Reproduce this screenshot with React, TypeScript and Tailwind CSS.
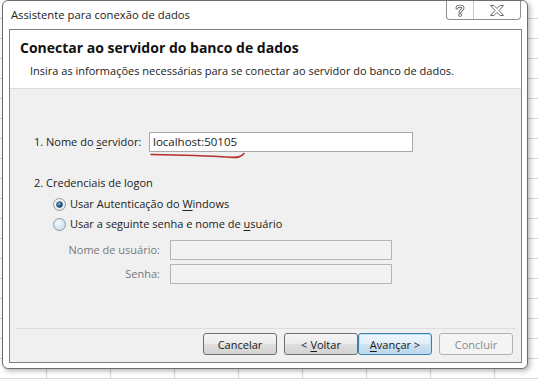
import React from 'react';

const font = "font-['Open_Sans','Noto_Sans',sans-serif]";

const Radio = ({ checked }: { checked: boolean }) => (
  <svg width="13" height="13" viewBox="0 0 13 13" className="shrink-0">
    <defs>
      <radialGradient id={checked ? 'rOn' : 'rOff'} cx="0.4" cy="0.35" r="0.7">
        <stop offset="0" stopColor={checked ? '#ffffff' : '#f4f9fd'} />
        <stop offset="1" stopColor={checked ? '#dfe7ee' : '#c6ddf0'} />
      </radialGradient>
      <radialGradient id="dot" cx="0.4" cy="0.35" r="0.7">
        <stop offset="0" stopColor="#7fb6dd" />
        <stop offset="0.6" stopColor="#2a5f8c" />
        <stop offset="1" stopColor="#12324f" />
      </radialGradient>
    </defs>
    <circle cx="6.5" cy="6.5" r="6" fill={`url(#${checked ? 'rOn' : 'rOff'})`} stroke="#8d9aa6" />
    {checked && <circle cx="6.5" cy="6.5" r="3" fill="url(#dot)" stroke="#1c3c5a" strokeWidth="0.6" />}
  </svg>
);

const Button = ({ children, variant }: { children: React.ReactNode; variant?: 'default' | 'disabled' }) => {
  let cls =
    'border-[#707070] bg-[linear-gradient(to_bottom,#f4f4f4_0%,#ececec_48%,#dedede_52%,#d3d3d3_100%)] text-[#1a1a1a]';
  if (variant === 'default')
    cls =
      'border-[#3c7fb1] bg-[linear-gradient(to_bottom,#eef6fb_0%,#e2eef7_48%,#cfe3f2_52%,#bcd6ec_100%)] text-[#1a1a1a] shadow-[inset_0_0_0_1px_#bfe0f5]';
  if (variant === 'disabled') cls = 'border-[#adb2b5] bg-[#f4f4f4] text-[#8a8a8a]';
  return (
    <div
      className={`${cls} flex h-[22px] w-[74px] items-center justify-center rounded-[3px] border text-[11px] leading-none`}
    >
      {children}
    </div>
  );
};

const App = () => {
  return (
    <div
      className={`${font} h-[379px] w-[538px] overflow-hidden bg-white [background-image:linear-gradient(to_right,#d6d6d6_1px,transparent_1px),linear-gradient(to_bottom,#d6d6d6_1px,transparent_1px)] [background-size:64px_20px] [background-position:46px_18px]`}
    >
      <div className="ml-[2px] flex h-[369px] w-[526px] flex-col rounded-[6px] border border-[#6e6e6e] bg-white pr-[5px] pb-[5px] pl-[6px] shadow-[2px_2px_5px_rgba(0,0,0,0.3)]">
        {/* title bar */}
        <div className="flex h-[28px] items-start justify-between">
          <div className="mt-[6px] ml-[2px] text-[11.25px] leading-[16px] text-[#222]">
            Assistente para conexão de dados
          </div>
          <div className="mr-[1px] flex h-[19px] rounded-b-[4px] border-x border-b border-[#8f8f8f] bg-white">
            <div className="flex w-[27px] items-center justify-center border-r border-[#c8c8c8]">
              <svg width="10" height="13" viewBox="0 0 10 13">
                <path
                  d="M2 4 C2 1.5 8 1.5 8 4 C8 6 5 6 5 8.2"
                  fill="none"
                  stroke="#6a6a6a"
                  strokeWidth="3"
                  strokeLinecap="round"
                />
                <path
                  d="M2 4 C2 1.5 8 1.5 8 4 C8 6 5 6 5 8.2"
                  fill="none"
                  stroke="#fff"
                  strokeWidth="1.2"
                  strokeLinecap="round"
                />
                <circle cx="5" cy="11" r="1.5" fill="#fff" stroke="#6a6a6a" strokeWidth="0.9" />
              </svg>
            </div>
            <div className="flex w-[46px] items-center justify-center">
              <svg width="14" height="11" viewBox="0 0 14 11">
                <polygon
                  points="0.5,0.5 4,0.5 7,3.5 10,0.5 13.5,0.5 9,5.5 13.5,10.5 10,10.5 7,7.5 4,10.5 0.5,10.5 5,5.5"
                  fill="#fff"
                  stroke="#6a6a6a"
                  strokeWidth="1"
                  strokeLinejoin="round"
                />
              </svg>
            </div>
          </div>
        </div>

        {/* inner panel */}
        <div className="flex flex-1 flex-col border border-[#808080]">
          <div className="h-[59px] border-b border-[#dcdcdc] bg-white pt-[8px] pl-[10px]">
            <div className="text-[14px] leading-[20px] font-bold text-[#111]">
              Conectar ao servidor do banco de dados
            </div>
            <div className="mt-[5px] pl-[10px] text-[11px] leading-[16px] text-[#222]">
              Insira as informações necessárias para se conectar ao servidor do banco de dados.
            </div>
          </div>

          <div className="flex flex-1 flex-col bg-[#f0f0f0] text-[11px] leading-[16px] text-[#222]">
            <div className="mt-[43px] flex h-[20px] items-center pl-[24px]">
              <div className="w-[115px]">
                1. Nome do <span className="underline underline-offset-2">s</span>ervidor:
              </div>
              <div className="relative flex h-[20px] w-[264px] items-center border border-[#a9a9a9] bg-white pl-[3px] text-[11.5px]">
                localhost:50105
                <svg
                  className="absolute top-[19px] left-[0px]"
                  width="96"
                  height="8"
                  viewBox="0 0 96 8"
                >
                  <path
                    d="M1 2.5 C 30 3, 60 4, 80 5.2 C 88 5.8, 91 5, 94 1.5"
                    fill="none"
                    stroke="#b5302b"
                    strokeWidth="1.6"
                    strokeLinecap="round"
                  />
                </svg>
              </div>
            </div>

            <div className="mt-[23px] h-[16px] pl-[24px]">2. Credenciais de logon</div>

            <div className="mt-[5px] flex h-[16px] items-center gap-[4px] pl-[43px]">
              <Radio checked />
              <span>
                Usar Autenticação do <span className="underline underline-offset-2">W</span>indows
              </span>
            </div>
            <div className="mt-[4px] flex h-[16px] items-center gap-[4px] pl-[43px]">
              <Radio checked={false} />
              <span>
                Usar a seguinte senha e nome de <span className="underline underline-offset-2">u</span>suário
              </span>
            </div>

            <div className="mt-[8px] flex h-[20px] items-center">
              <div className="w-[160px] pr-[10px] text-right text-[#7a7a7a]">Nome de usuário:</div>
              <div className="h-[20px] w-[222px] border border-[#b5b5b5] bg-[#f2f2f2]" />
            </div>
            <div className="mt-[4px] flex h-[20px] items-center">
              <div className="w-[160px] pr-[10px] text-right text-[#7a7a7a]">Senha:</div>
              <div className="h-[20px] w-[222px] border border-[#b5b5b5] bg-[#f2f2f2]" />
            </div>

            <div className="flex-1" />

            <div className="mr-[5px] ml-[6px] h-px bg-[#dcdcdc]" />
            <div className="mt-[4px] mb-[7px] flex justify-end gap-[7px] pr-[8px]">
              <Button>Cancelar</Button>
              <div className="flex">
                <Button>
                  &lt; <span className="ml-[3px] underline underline-offset-2">V</span>oltar
                </Button>
                <Button variant="default">
                  <span className="underline underline-offset-2">A</span>vançar &gt;
                </Button>
              </div>
              <Button variant="disabled">Concluir</Button>
            </div>
          </div>
        </div>
      </div>
    </div>
  );
};

export default App;
